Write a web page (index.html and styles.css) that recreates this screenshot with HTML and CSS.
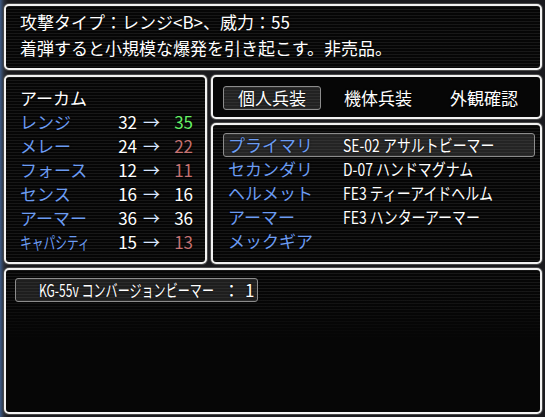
FILE: index.html
```html
<!DOCTYPE html>
<html lang="ja">
<head>
<meta charset="utf-8">
<title>装備</title>
<link rel="stylesheet" href="styles.css">
</head>
<body>
<div class="screen">
  <section class="win help">
    <p>攻撃タイプ：レンジ&lt;B&gt;、威力：55</p>
    <p>着弾すると小規模な爆発を引き起こす。非売品。</p>
  </section>
  <div class="middle">
    <section class="win stats">
      <div class="stat-grid">
        <span class="name">アーカム</span>
        <span class="label">レンジ</span><span class="num">32</span><span class="arrow">→</span><span class="num up">35</span>
        <span class="label">メレー</span><span class="num">24</span><span class="arrow">→</span><span class="num down">22</span>
        <span class="label">フォース</span><span class="num">12</span><span class="arrow">→</span><span class="num down">11</span>
        <span class="label">センス</span><span class="num">16</span><span class="arrow">→</span><span class="num">16</span>
        <span class="label">アーマー</span><span class="num">36</span><span class="arrow">→</span><span class="num">36</span>
        <span class="label"><span class="squeeze cap">キャパシティ</span></span><span class="num">15</span><span class="arrow">→</span><span class="num down">13</span>
      </div>
    </section>
    <div class="right">
      <section class="win tabs">
        <span class="tab active">個人兵装</span>
        <span class="tab">機体兵装</span>
        <span class="tab">外観確認</span>
      </section>
      <section class="win equips">
        <div class="row selected"><span class="slot">プライマリ</span><span class="item"><span class="squeeze val">SE-02 アサルトビーマー</span></span></div>
        <div class="row"><span class="slot">セカンダリ</span><span class="item"><span class="squeeze val">D-07 ハンドマグナム</span></span></div>
        <div class="row"><span class="slot">ヘルメット</span><span class="item"><span class="squeeze val">FE3 ティーアイドヘルム</span></span></div>
        <div class="row"><span class="slot">アーマー</span><span class="item"><span class="squeeze val">FE3 ハンターアーマー</span></span></div>
        <div class="row"><span class="slot">メックギア</span><span class="item"></span></div>
      </section>
    </div>
  </div>
  <section class="win items">
    <div class="item-box">
      <span class="item-name"><span class="squeeze iname">KG-55v コンバージョンビーマー</span></span>
      <span class="colon">：</span>
      <span class="count">1</span>
    </div>
  </section>
</div>
</body>
</html>
```
FILE: styles.css
```css
* { box-sizing: border-box; margin: 0; padding: 0; }
html, body {
  width: 545px;
  height: 417px;
  overflow: hidden;
  background: #1c1c22;
}
body {
  font-family: "Noto Sans CJK JP", "Noto Sans", sans-serif;
  font-size: 17px;
  color: #ffffff;
  text-shadow: 0 0 2px rgba(0, 0, 0, 0.9);
}
.screen {
  display: flex;
  flex-direction: column;
  gap: 4px;
  height: 417px;
  padding: 4px 3px 3px 4px;
  background: linear-gradient(to right, #3c5a86 0, #2a2f3a 4px, #1a1a1e 8px);
}
.win {
  border: 2px solid #f2f2f2;
  border-radius: 5px;
  box-shadow: 0 0 0 1px #4a4a4a;
  background:
    repeating-linear-gradient(to bottom, rgba(255,255,255,0.07) 0 1px, rgba(0,0,0,0) 1px 3px),
    #060606;
}
.help {
  height: 66px;
  margin-bottom: 1px;
  padding: 3px 14px 0;
  line-height: 26px;
}
.middle {
  display: flex;
  gap: 4px;
  height: 189px;
}
.stats {
  width: 203px;
  padding: 9px 12px 0 14px;
}
.stat-grid {
  display: grid;
  grid-template-columns: minmax(0, 1fr) 27px 29px 27px;
  grid-auto-rows: 24px;
  line-height: 24px;
}
.name { grid-column: 1 / -1; }
.label { color: #6c9cf2; white-space: nowrap; min-width: 0; }
.num { text-align: right; }
.arrow { text-align: center; color: #d8e6ff; }
.up { color: #66f066; }
.down { color: #c47272; }
.squeeze {
  display: inline-block;
  white-space: nowrap;
  transform-origin: left center;
}
.cap { transform: scaleX(0.69); }
.right {
  flex: 1;
  display: flex;
  flex-direction: column;
  gap: 4px;
}
.tabs {
  height: 44px;
  display: grid;
  grid-template-columns: repeat(3, 98px);
  column-gap: 8px;
  padding: 9px 0 0 10px;
  background: #060606;
}
.tab {
  height: 24px;
  line-height: 24px;
  text-align: center;
}
.tab.active {
  border: 1px solid #8c8c8c;
  border-radius: 3px;
  line-height: 22px;
  background:
    repeating-linear-gradient(to bottom, rgba(255,255,255,0.06) 0 1px, rgba(0,0,0,0) 1px 3px),
    #222222;
}
.equips {
  flex: 1;
  padding: 8px 5px 0 10px;
}
.row {
  display: flex;
  height: 24px;
  line-height: 24px;
  padding-left: 5px;
}
.row.selected {
  border: 1px solid #8c8c8c;
  border-radius: 3px;
  padding-left: 4px;
  line-height: 22px;
  background:
    repeating-linear-gradient(to bottom, rgba(255,255,255,0.06) 0 1px, rgba(0,0,0,0) 1px 3px),
    #242424;
}
.slot { width: 115px; color: #6c9cf2; white-space: nowrap; }
.item { flex: 1; white-space: nowrap; }
.val { transform: scaleX(0.82); }
.items {
  flex: 1;
  padding: 8px 0 0 9px;
  background:
    linear-gradient(to bottom, rgba(6,6,6,0) 20px, #060606 70px),
    repeating-linear-gradient(to bottom, rgba(255,255,255,0.07) 0 1px, rgba(0,0,0,0) 1px 3px),
    #060606;
}
.item-box {
  display: flex;
  width: 243px;
  height: 24px;
  line-height: 22px;
  border: 1px solid #8c8c8c;
  border-radius: 3px;
  padding-left: 23px;
  background:
    repeating-linear-gradient(to bottom, rgba(255,255,255,0.06) 0 1px, rgba(0,0,0,0) 1px 3px),
    #1e1e1e;
}
.item-name { width: 184px; white-space: nowrap; }
.iname { transform: scaleX(0.71); }
.colon { width: 22px; }
.count { width: 10px; }
```
